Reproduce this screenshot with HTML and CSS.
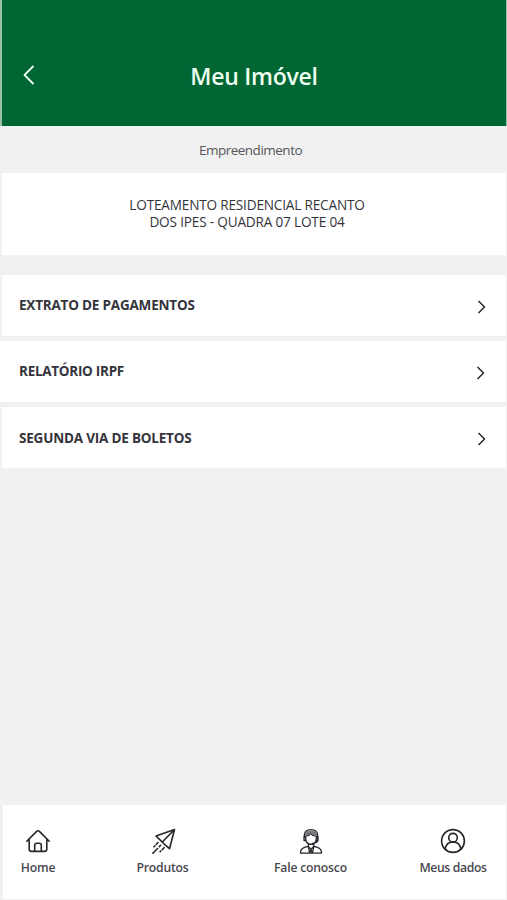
FILE: index.html
```html
<!DOCTYPE html>
<html lang="pt-BR">
<head>
<meta charset="utf-8">
<title>Meu Imóvel</title>
<link rel="stylesheet" href="styles.css">
</head>
<body>
<div class="screen">
  <header class="header">
    <svg class="back" viewBox="0 0 12 20"><path d="M10.5 1 1.5 10l9 9"/></svg>
    <h1 class="title">Meu Imóvel</h1>
  </header>
  <main class="content">
    <div class="caption"><span>Empreendimento</span></div>
    <section class="property">
      <p class="line">LOTEAMENTO RESIDENCIAL RECANTO<br>DOS IPES - QUADRA 07 LOTE 04</p>
    </section>
    <ul class="menu">
      <li class="row"><span class="label">EXTRATO DE PAGAMENTOS</span><svg class="chevron" viewBox="0 0 9 14"><path d="m1.5 1 6 6-6 6"/></svg></li>
      <li class="row middle"><span class="label irpf">RELATÓRIO IRPF</span><svg class="chevron" viewBox="0 0 9 14"><path d="m1.5 1 6 6-6 6"/></svg></li>
      <li class="row last"><span class="label">SEGUNDA VIA DE BOLETOS</span><svg class="chevron" viewBox="0 0 9 14"><path d="m1.5 1 6 6-6 6"/></svg></li>
    </ul>
  </main>
  <nav class="nav">
    <a class="tab">
      <svg class="icon" viewBox="0 0 26 26"><path d="M1.8 13.3 11.6 3.4q1.4-1.3 2.8 0l9.8 9.9M4.2 11.5V21q0 2.4 2.4 2.4h12.8q2.4 0 2.4-2.4v-9.5M9.7 23.2v-6q0-2 2-2h2.6q2 0 2 2v6"/></svg>
      <span>Home</span>
    </a>
    <a class="tab">
      <svg class="icon" viewBox="0 0 26 26"><path d="M24.5 1.5 6 8l5.3 5.1 2.7 2.7 5.5 4.9L24.5 1.5 12.3 14"/><path d="m8 14.5-1.7 1.8m-1.4 1.5-.9.9M10.6 17.3l-1.2 1.3M7.6 20.5l-4.8 4.7M14 19.7l-1.8 2m-1.5 1.4-.6.6"/></svg>
      <span>Produtos</span>
    </a>
    <a class="tab">
      <svg class="icon agent" viewBox="0 0 26 26"><path d="M6.3 9.7V7.2Q6.8 1.6 13 1.6t6.7 5.6v4M7.7 8.2q3.2-.3 5-2.6 1.8 2.3 5.6 2.6v2.9q-.5 5-5.3 5.2-4.8-.2-5.3-5.2ZM7.6 8.5H6v4h1.6m10.8-4H20v4h-1.6M20 12q0 3-5.8 3.3M10.4 15.8v2.5L13 21.4l2.8-3.1v-2.5M10.4 18.1l-5 1.7Q2.5 21 2.5 25.1h21q0-4.1-2.9-5.3l-4.8-1.7M10.2 18.3l1.5 6.6 1.3-3.5 1.4 3.5 1.5-6.6"/><path class="hair" d="M7 8V6.3Q8.3 2.5 13 2.5T19 6.3V8q-4-.2-6.2-3.2Q10.6 7.7 7 8Z"/></svg>
      <span>Fale conosco</span>
    </a>
    <a class="tab">
      <svg class="icon" viewBox="0 0 26 26"><circle cx="13" cy="13" r="11.4"/><circle cx="13" cy="9.7" r="4.3"/><path d="M5.3 21.4q.5-7.3 7.7-7.4 7.2.1 7.7 7.4"/></svg>
      <span class="dados">Meus dados</span>
    </a>
  </nav>
</div>
</body>
</html>
```

FILE: styles.css
```css
* { box-sizing: border-box; }
body { margin: 0; background: #f1f1f1; font-family: "Open Sans", "Noto Sans", sans-serif; color: #34343c; }
h1, p, ul { margin: 0; padding: 0; }
svg { display: block; flex: none; fill: none; stroke: #25252b; stroke-width: 1.6; stroke-linecap: round; stroke-linejoin: round; }
span, p, h1 { white-space: nowrap; }
.screen { height: 900px; display: flex; flex-direction: column; }
.header { height: 126px; margin: 0 1px 0 2px; padding: 24px 21px 0; display: grid; grid-template-columns: 12px 1fr 12px; align-items: center; background: #006633; box-shadow: -2px 0 #96c0a7, 1px 0 #96c0a7; }
.back { width: 12px; height: 20px; stroke: #eefff1; stroke-width: 1.8; stroke-linecap: butt; }
.title { color: #eefff1; font-size: 23px; font-weight: 600; line-height: 30px; letter-spacing: -0.25px; text-align: center; padding-top: 2px; }
.content { flex: 1; }
.caption { height: 47px; display: flex; justify-content: center; align-items: center; padding: 1px 6px 0 0; font-size: 13.5px; letter-spacing: -0.5px; color: #56565a; }
.property { height: 82px; margin: 0 1px 0 2px; padding: 23px 14px 0 0; background: #fff; text-align: center; }
.line { font-size: 13.6px; line-height: 17px; letter-spacing: -0.18px; }
.menu { margin-top: 20px; list-style: none; display: grid; gap: 5px; }
.row { height: 61px; margin: 0 1px 0 2px; padding: 0 20px 0 17px; display: flex; align-items: center; justify-content: space-between; background: #fff; }
.middle { margin-left: 0; padding-left: 19px; padding-right: 21px; }
.label { font-size: 13.5px; font-weight: 700; line-height: 18px; letter-spacing: -0.2px; padding-bottom: 1px; }
.irpf { letter-spacing: -0.28px; }
.last .label { padding-bottom: 0; }
.chevron { width: 9px; height: 14px; margin-top: 2px; stroke-width: 1.5; stroke-linecap: butt; }
.nav { height: 95px; margin: 0 1px 0 3px; padding-top: 23px; background: #fff; border-bottom: 1px solid #f3f3f3; display: grid; grid-template-columns: 70px 179px 117px 137px; }
.tab { display: flex; flex-direction: column; align-items: center; font-size: 12.2px; font-weight: 600; line-height: 18px; letter-spacing: -0.2px; color: #48484e; }
.tab:last-child { padding-left: 31px; }
.icon { width: 26px; height: 26px; margin-bottom: 5px; }
.dados { letter-spacing: -0.35px; }
.agent { stroke-width: 1.3; }
.hair { fill: #77777b; stroke: none; }
```
